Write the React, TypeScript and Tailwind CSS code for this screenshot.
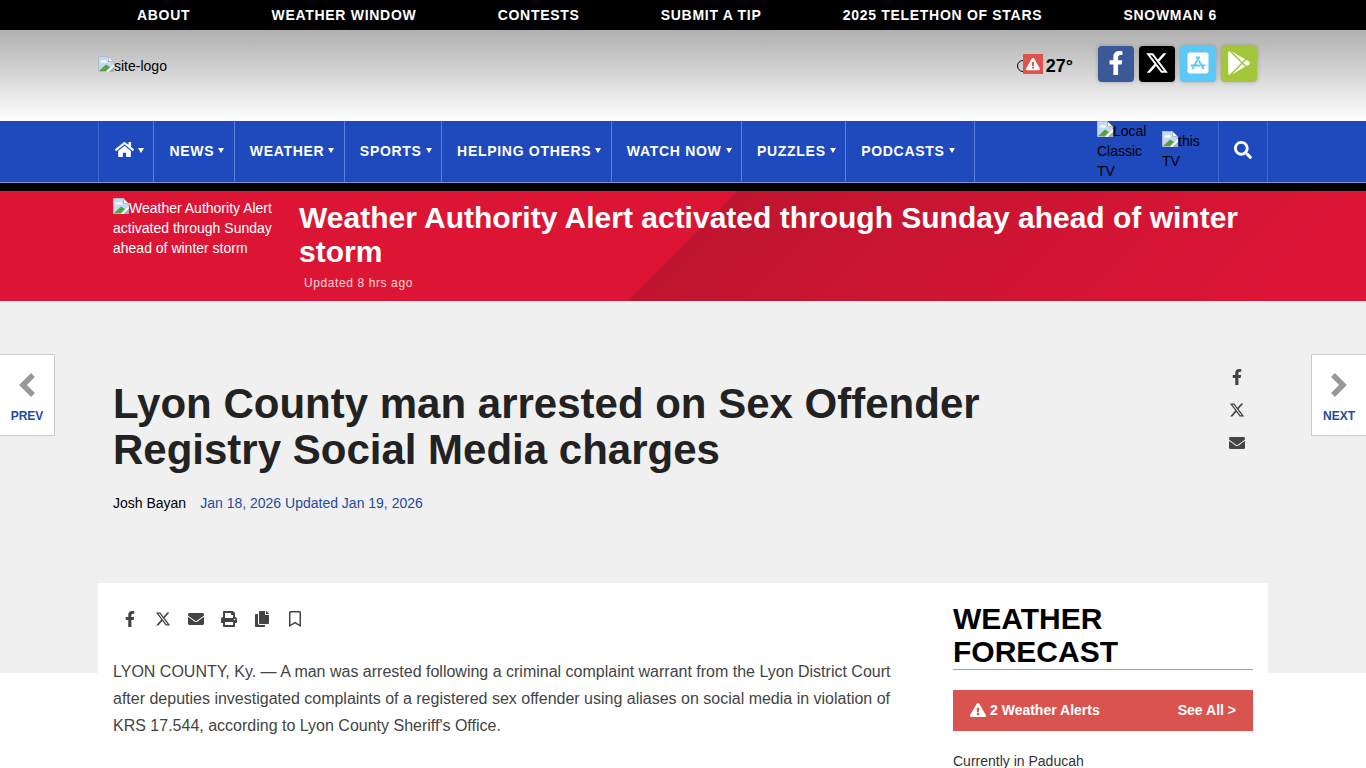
import type { ReactNode } from "react";
import { FaXTwitter } from "react-icons/fa6";
import {
  FaAppStoreIos,
  FaCopy,
  FaEnvelope,
  FaExclamationTriangle,
  FaFacebookF,
  FaGooglePlay,
  FaHome,
  FaPrint,
  FaRegBookmark,
  FaSearch,
} from "react-icons/fa";

const topLinks = ["About", "Weather Window", "Contests", "Submit a Tip", "2025 Telethon of Stars", "Snowman 6"];

const sections = ["News", "Weather", "Sports", "Helping Others", "Watch Now", "Puzzles", "Podcasts"];

function MissingImage({ alt }: { alt: string }) {
  return (
    <>
      <svg viewBox="0 0 16 16" className="inline-block h-4 w-4 align-[-1px]" aria-hidden="true">
        <path d="M0.5 0.5H10.5L15.5 5.5V15.5H0.5Z" fill="#c3d9f7" stroke="#b5bac0" />
        <path d="M2.5 6.5a2 2 0 0 1 3-2 2.200 2.200 0 0 1 3.500 2Z" fill="#fff" />
        <path d="M1 15L8 8.500L12 11L8 15Z" fill="#53a33f" />
        <path d="M10.500 0.500V5.500H15.500Z" fill="#fff" stroke="#b5bac0" />
        <path d="M16 10.500V16H10.500Z" fill="#a9adb3" />
        <path d="M16 8L8 16H10.500L16 10.500Z" fill="#fff" />
      </svg>
      {alt}
    </>
  );
}

function Caret() {
  return (
    <svg viewBox="0 0 6 5" className="h-[5px] w-[6px]" aria-hidden="true">
      <path d="M0 0H6L3 5Z" fill="currentColor" />
    </svg>
  );
}

function Chevron({ direction }: { direction: "left" | "right" }) {
  return (
    <svg viewBox="0 0 28 28" className="h-7 w-7 text-[#999]" aria-hidden="true">
      <path
        d={direction === "left" ? "M20 4L10 14L20 24" : "M8 4L18 14L8 24"}
        fill="none"
        stroke="currentColor"
        strokeWidth="5.500"
      />
    </svg>
  );
}

function SocialButton({ label, className, children }: { label: string; className: string; children: ReactNode }) {
  return (
    <a
      href="#"
      aria-label={label}
      className={`flex h-9 w-9 items-center justify-center rounded-sm pb-0.5 text-2xl text-white shadow-[0_0_4px_rgba(0,0,0,0.25)] ${className}`}
    >
      {children}
    </a>
  );
}

function ShareLink({ label, children }: { label: string; children: ReactNode }) {
  return (
    <a href="#" aria-label={label} className="flex h-[33px] w-[33px] items-center justify-center text-base text-[#444]">
      {children}
    </a>
  );
}

export default function App() {
  return (
    <div className="bg-white font-['Liberation_Sans',Arial,sans-serif] text-sm leading-5 text-black">
      <nav aria-label="Secondary" className="bg-black">
        <ul className="mx-auto flex h-[30px] max-w-[1170px] items-center justify-between pr-[51px] pl-[39px] text-sm font-bold tracking-wider text-white uppercase">
          {topLinks.map((link) => (
            <li key={link}>
              <a href="#">{link}</a>
            </li>
          ))}
        </ul>
      </nav>

      <header className="bg-linear-to-b from-[#b0b0b0] to-white">
        <div className="mx-auto flex h-[91px] max-w-[1170px] justify-between">
          <a href="#" className="pt-[26px]">
            <MissingImage alt="site-logo" />
          </a>
          <div className="flex gap-[25px] pt-4 pr-[11px]">
            <a href="#" className="flex h-10 items-center text-lg font-bold">
              <span className="h-3 w-3 rounded-full border border-black" />
              <span className="-ml-1.5 mr-[3px] mb-1 flex h-5 w-5 items-center justify-center bg-[#e0524c] text-sm text-white">
                <FaExclamationTriangle />
              </span>
              27°
            </a>
            <div className="flex gap-[5px]">
              <SocialButton label="Facebook" className="bg-[#3b5998]"><FaFacebookF /></SocialButton>
              <SocialButton label="X" className="bg-black"><FaXTwitter /></SocialButton>
              <SocialButton label="App Store" className="bg-[#5bc8f8]"><FaAppStoreIos /></SocialButton>
              <SocialButton label="Google Play" className="bg-[#a4c639]"><FaGooglePlay /></SocialButton>
            </div>
          </div>
        </div>
      </header>

      <nav aria-label="Main" className="border-b-8 border-black bg-[#1e4abd]">
        <div className="border-b border-[#7b93d8]">
          <div className="mx-auto flex h-[61px] max-w-[1170px] justify-between border-x border-[#3f66cf]">
            <ul className="flex w-[876px] text-sm font-bold tracking-wider text-white uppercase">
              <li className="flex flex-auto border-r border-[#5c7fdb]">
                <a href="#" aria-label="Home" className="flex items-center gap-1 pr-[9px] pb-0.5 pl-4">
                  <FaHome className="mb-0.5 text-[19px]" />
                  <Caret />
                </a>
              </li>
              {sections.map((name) => (
                <li key={name} className="flex flex-auto border-r border-[#5c7fdb] last:pr-2.5">
                  <a href="#" className="flex items-center gap-1 pr-[9px] pb-0.5 pl-[15px] whitespace-nowrap">
                    {name}
                    <Caret />
                  </a>
                </li>
              ))}
            </ul>
            <div className="flex">
              <a href="#" className="w-[65px]"><MissingImage alt="Local Classic TV" /></a>
              <a href="#" className="w-14 pt-2.5 pr-2"><MissingImage alt="this TV" /></a>
              <button type="button" aria-label="Search" className="flex w-[49px] items-center justify-center border-l border-[#3f66cf] pb-1 text-lg text-white">
                <FaSearch />
              </button>
            </div>
          </div>
        </div>
      </nav>

      <section aria-label="Weather alert" className="bg-[#dc1535] bg-[linear-gradient(135deg,transparent_50%,rgba(60,20,20,0.18)_50%,transparent_92%)] text-white">
        <div className="mx-auto flex h-[110px] max-w-[1170px] px-[15px] pt-[7px]">
          <a href="#" className="w-[186px] shrink-0 pr-6">
            <MissingImage alt="Weather Authority Alert activated through Sunday ahead of winter storm" />
          </a>
          <div>
            <h2 className="pt-[3px] text-3xl leading-[34px] font-bold">
              <a href="#">Weather Authority Alert activated through Sunday ahead of winter storm</a>
            </h2>
            <p className="px-[5px] pt-1 text-xs leading-5 tracking-wider text-white/80">Updated 8 hrs ago</p>
          </div>
        </div>
      </section>

      <main className="bg-[linear-gradient(#f0f0f0_372px,#ffffff_372px)]">
        <div className="mx-auto max-w-[1170px]">
          <div className="flex h-[282px] justify-between px-[15px] pt-[59px]">
            <div className="max-w-[950px] pt-[21px]">
              <h1 className="text-[42px] leading-[46px] font-bold text-[#222]">
                Lyon County man arrested on Sex Offender Registry Social Media charges
              </h1>
              <p className="flex gap-3.5 pt-5">
                <a href="#">Josh Bayan</a>
                <time className="text-[#1d4b9f]">Jan 18, 2026 Updated Jan 19, 2026</time>
              </p>
            </div>
            <div className="flex flex-col">
              <ShareLink label="Share on Facebook"><FaFacebookF /></ShareLink>
              <ShareLink label="Share on X"><FaXTwitter /></ShareLink>
              <ShareLink label="Share by email"><FaEnvelope /></ShareLink>
            </div>
          </div>

          <div className="flex justify-between bg-white px-[15px]">
            <article className="w-[780px] pt-[19px]">
              <div className="flex">
                <ShareLink label="Facebook"><FaFacebookF /></ShareLink>
                <ShareLink label="X"><FaXTwitter /></ShareLink>
                <ShareLink label="Email"><FaEnvelope /></ShareLink>
                <ShareLink label="Print"><FaPrint /></ShareLink>
                <ShareLink label="Copy article link"><FaCopy /></ShareLink>
                <ShareLink label="Save"><FaRegBookmark /></ShareLink>
              </div>
              <p className="pt-[23px] text-base leading-[27px] text-[#444]">
                LYON COUNTY, Ky. — A man was arrested following a criminal complaint warrant from the Lyon District
                Court after deputies investigated complaints of a registered sex offender using aliases on social media
                in violation of KRS 17.544, according to Lyon County Sheriff's Office.
              </p>
            </article>
            <aside className="w-[300px] pt-[19px]">
              <h2 className="border-b border-[#d99a1c] pb-px text-3xl leading-[33px] font-bold uppercase">
                Weather
                <br />
                Forecast
              </h2>
              <a href="#" className="mt-5 flex h-[41px] items-center justify-between bg-[#d9534f] px-[17px] pb-0.5 font-bold text-white">
                <span className="flex items-center gap-1">
                  <FaExclamationTriangle className="text-base" />2 Weather Alerts
                </span>
                <span>See All &gt;</span>
              </a>
              <p className="pt-5 text-[#333]">Currently in Paducah</p>
            </aside>
          </div>
        </div>
      </main>

      <a href="#" className="fixed top-[354px] left-0 flex h-[82px] w-[55px] flex-col items-center gap-[7px] border border-l-0 border-[#ccc] bg-white pt-4 text-xs font-bold text-[#1d4b9f]">
        <Chevron direction="left" />
        <span className="leading-5">PREV</span>
      </a>
      <a href="#" className="fixed top-[354px] right-0 flex h-[82px] w-[55px] flex-col items-center gap-[7px] border border-r-0 border-[#ccc] bg-white pt-4 text-xs font-bold text-[#1d4b9f]">
        <Chevron direction="right" />
        <span className="leading-5">NEXT</span>
      </a>
    </div>
  );
}
